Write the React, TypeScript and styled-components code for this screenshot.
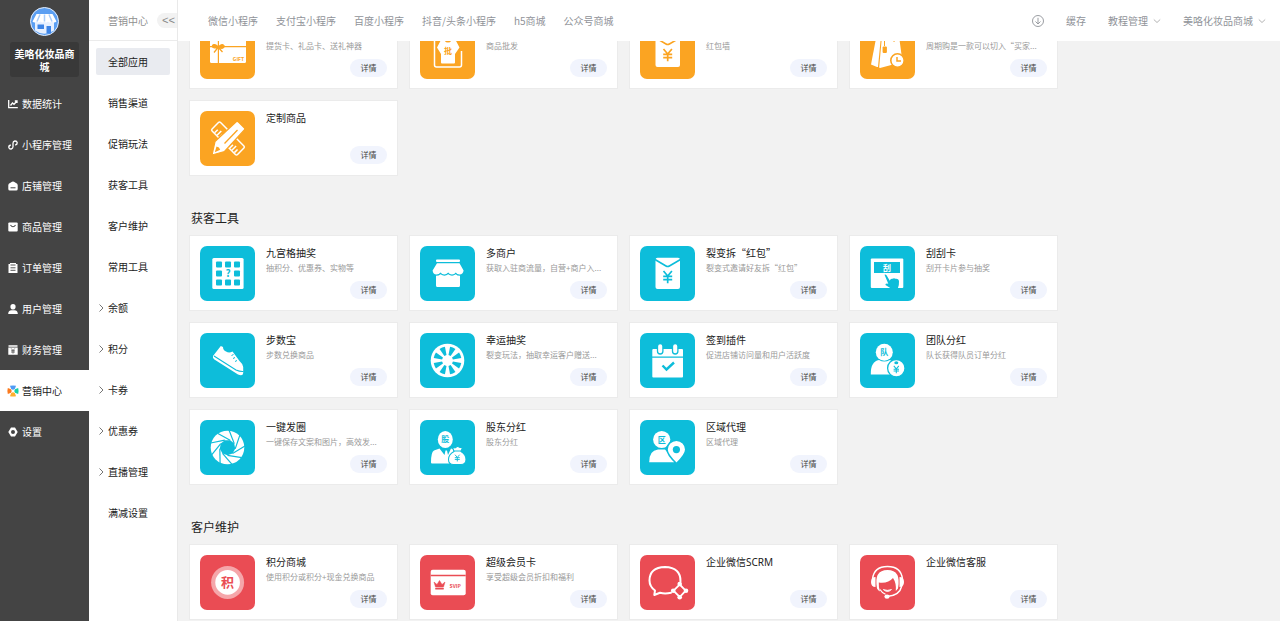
import React, { useLayoutEffect, useRef } from "react";
import styled, { createGlobalStyle } from "styled-components";

const ORANGE = "#fba422";
const CYAN = "#0dbdda";
const RED = "#ea4c54";
const CJK = '"Noto Sans CJK SC", sans-serif';

const GlobalStyle = createGlobalStyle`
  * { box-sizing: border-box; }
  body { margin: 0; font-family: ${CJK}; font-size: 10px; color: #222; background: #f2f2f2; }
  a { color: inherit; text-decoration: none; }
  button { font: inherit; color: inherit; border: 0; padding: 0; cursor: pointer; }
  h2, h3, p, ul { margin: 0; padding: 0; font-weight: 400; }
  ul { list-style: none; }
  svg { display: block; flex: none; }
`;

const Page = styled.div`
  display: flex;
  height: 100vh;
  overflow: hidden;
`;

const Sidebar = styled.aside`
  flex: none;
  width: 89px;
  background: #444;
  color: #fff;
`;

const Brand = styled.div`
  display: flex;
  flex-direction: column;
  align-items: center;
  gap: 6px;
  padding: 7px 10px 6px;
`;

const BrandName = styled.div`
  width: 100%;
  padding: 5px 4px 4px;
  border-radius: 3px;
  background: #393939;
  font-weight: 700;
  line-height: 13px;
  text-align: center;
`;

const MainLink = styled.a<{ $active?: boolean }>`
  display: flex;
  align-items: center;
  gap: 4px;
  height: 41px;
  padding-left: 8px;
  background: ${(p) => (p.$active ? "#fff" : "transparent")};
  && { color: ${(p) => (p.$active ? "#222" : "#fff")}; }
`;

const SubPanel = styled.aside`
  flex: none;
  width: 89px;
  background: #fff;
  border-right: 1px solid #e9e9e9;
`;

const SubHeader = styled.div`
  display: flex;
  align-items: center;
  justify-content: space-between;
  height: 41px;
  padding-left: 19px;
  border-bottom: 1px solid #ebebeb;
  color: #8f8f8f;
`;

const Collapse = styled.button`
  width: 20px;
  height: 15px;
  padding: 2px 0 0 5px;
  border-radius: 8px 0 0 8px;
  background: #f2f2f2;
  text-align: left;
  && { color: #888; font-family: "Liberation Mono", monospace; font-size: 11px; line-height: 13px; }
`;

const SubItem = styled.li`
  display: flex;
  align-items: center;
  height: 41px;
  padding: 0 7px;
`;

const SubLink = styled.a<{ $active?: boolean }>`
  display: flex;
  align-items: center;
  width: 100%;
  height: 27px;
  border-radius: 2px;
  background: ${(p) => (p.$active ? "#e9ebf0" : "transparent")};
`;

const Arrow = styled.span`
  display: flex;
  width: 12px;
  padding-left: 1px;
`;

const Main = styled.div`
  flex: 1;
  min-width: 0;
  display: flex;
  flex-direction: column;
`;

const TopBar = styled.header`
  flex: none;
  display: flex;
  align-items: center;
  justify-content: space-between;
  height: 41px;
  padding: 0 14px 0 30px;
  background: #fff;
  color: #909399;
  white-space: nowrap;
`;

const TopNav = styled.nav`
  display: flex;
  gap: 18px;
`;

const TopTools = styled.div`
  display: flex;
  align-items: center;
  gap: 22px;
`;

const Tool = styled.button`
  display: flex;
  align-items: center;
  gap: 5px;
  background: none;
`;

const Content = styled.main`
  flex: 1;
  min-height: 0;
  overflow-y: auto;
  scrollbar-width: none;
  padding: 11px;
`;

const Section = styled.section`
  padding-bottom: 32px;
`;

const Heading = styled.h2`
  padding: 0 2px 7px;
  font-size: 12px;
  line-height: 20px;
`;

const Cards = styled.div`
  display: flex;
  flex-wrap: wrap;
  gap: 11px;
`;

const Card = styled.article`
  display: flex;
  gap: 11px;
  width: 209px;
  height: 76px;
  padding: 10px;
  border: 1px solid #ebebeb;
  background: #fff;
`;

const Tile = styled.svg`
  width: 55px;
  height: 55px;
  border-radius: 7px;
`;

const Info = styled.div`
  flex: 1;
  min-width: 0;
  display: flex;
  flex-direction: column;
`;

const Title = styled.h3`
  height: 14px;
  font-size: 10px;
  line-height: 14px;
  white-space: nowrap;
`;

const Latin = styled.span`
  font-family: "Noto Sans", ${CJK};
`;

const Desc = styled.p`
  height: 16px;
  color: #999;
  font-size: 8px;
  line-height: 16px;
  white-space: nowrap;
`;

const Detail = styled.button`
  align-self: flex-end;
  width: 37px;
  height: 18px;
  margin-top: 5px;
  border-radius: 9px;
  background: #f1f4fd;
  && { color: #444; font-size: 8px; line-height: 18px; }
`;

/* ---------- tile drawings, 55 x 55 ---------- */

type GlyphProps = { x: number; y: number; size: number; fill: string; children: React.ReactNode };

const Glyph = ({ x, y, size, fill, children }: GlyphProps) => (
  <text x={x} y={y} fontSize={size} fill={fill} fontWeight={700} textAnchor="middle" fontFamily={CJK}>
    {children}
  </text>
);

const Yen = ({ x, y, s = 1, c }: { x: number; y: number; s?: number; c: string }) => (
  <path
    transform={`translate(${x} ${y}) scale(${s})`}
    d="M-4.2 -6L0 -1L4.2 -6M0 -1V6.2M-4.5 -0.6H4.5M-4.5 2.6H4.5"
    fill="none"
    stroke={c}
    strokeWidth="1.7"
  />
);

const Envelope = ({ c }: { c: string }) => (
  <>
    <rect x="15.5" y="11.7" width="24.5" height="31.3" rx="2" fill="#fff" />
    <path d="M15 13.5L26 20Q27.7 21 29.4 20L40.5 13.5" fill="none" stroke={c} strokeWidth="1.6" />
    <Yen x={27.7} y={31} c={c} />
  </>
);

const polar = (r: number, deg: number, cx = 27.5, cy = 27.5) => {
  const a = (deg * Math.PI) / 180;
  return `${(cx + r * Math.cos(a)).toFixed(2)} ${(cy + r * Math.sin(a)).toFixed(2)}`;
};

const drawings: Record<string, React.ReactNode> = {
  gift: (
    <>
      <rect x="10" y="15" width="36" height="24" rx="1.5" fill="#fff" />
      <path d="M10 22.7H46M18.4 15V39" stroke={ORANGE} strokeWidth="1.2" />
      <path d="M18.4 23Q14 19 12.5 21.5Q12 25 18.4 23.5Q24 25.5 24.2 22Q22.5 19 18.4 23L14 28.5M18.4 23.5L22.5 28" fill={ORANGE} stroke={ORANGE} strokeWidth="1.3" />
      <Glyph x={38.5} y={36.5} size={5} fill={ORANGE}>GIFT</Glyph>
    </>
  ),
  wholesale: (
    <>
      <path d="M14.5 12V41Q14.5 43 16.5 43H39.5Q41.5 43 41.5 41V27" fill="none" stroke="#fff" strokeWidth="1.5" />
      <path d="M22 14L17 23.5L21 30V38.5Q21 39.5 22 39.5H34Q35 39.5 35 38.5V30L39.5 23.5L34.5 14Z" fill="#fff" />
      <circle cx="28" cy="15" r="3.5" fill={ORANGE} />
      <Glyph x={28} y={29.5} size={8} fill={ORANGE}>批</Glyph>
    </>
  ),
  wall: <Envelope c={ORANGE} />,
  packet: <Envelope c={CYAN} />,
  period: (
    <>
      <path d="M16.5 12H21L18 43H17L11 40.5Z" fill="#fff" />
      <path d="M22 12H39L42.5 38L20 44Q19 44 19.2 43Z" fill="#fff" />
      <path d="M24.5 12V22M33 12Q35 15 34 18" fill="none" stroke={ORANGE} strokeWidth="1" />
      <rect x="22.6" y="22.5" width="4.3" height="6.5" rx="1" fill={ORANGE} />
      <circle cx="37.5" cy="36.5" r="6.7" fill="#fff" stroke={ORANGE} strokeWidth="1.6" />
      <path d="M37 33V37H41" fill="none" stroke={ORANGE} strokeWidth="1.5" />
    </>
  ),
  custom: (
    <>
      <g transform="rotate(45 28 27.5)" fill="none" stroke="#fff" strokeWidth="1.5">
        <rect x="10" y="21.5" width="36" height="12" rx="1.5" />
        <path d="M14.5 33V28.5M18 33V27M21.5 33V28.5M36 33V28.5M39 33V27M42.5 33V28.5" />
      </g>
      <path d="M12 44L15 30.5L36.5 10.5Q37.2 10 38 10.7L44.5 17.2Q45.2 18 44.5 18.7L24.5 40.5Z" fill="#fff" stroke={ORANGE} strokeWidth="1.2" />
      <path d="M14.8 41.2L16.5 35.5Q19.5 36 20.2 38.8Z" fill={ORANGE} />
      <path d="M24.5 32.5L37.5 19" stroke={ORANGE} strokeWidth="1.3" />
    </>
  ),
  grid: (
    <>
      <rect x="12.3" y="12" width="31.3" height="31" rx="1.5" fill="#fff" />
      {[16, 25, 34].map((x) =>
        [15.5, 24.5, 33.5].map((y) =>
          x === 25 && y === 24.5 ? null : <rect key={`${x}-${y}`} x={x} y={y} width="6" height="6" rx="1" fill={CYAN} />
        )
      )}
      <Glyph x={28} y={31} size={10} fill={CYAN}>?</Glyph>
    </>
  ),
  shop: (
    <>
      <rect x="16" y="13.5" width="24" height="2.6" rx="1" fill="#fff" />
      <path d="M17 17.3H39.5L43.6 24.5Q43 28.5 39.5 28.5Q37 28.5 35.8 26.5Q34.5 28.5 32 28.5Q29.5 28.5 28.2 26.5Q26.5 28.5 24.2 28.5Q22 28.5 20.5 26.5Q19 28.5 16.5 28.5Q13 28.5 12.6 24.5Z" fill="#fff" />
      <path d="M16 29.8Q19 29.8 20.5 28.3Q24.5 31 28.2 28.3Q32 31 35.8 28.3Q37 29.8 40 29.8V39.5Q40 41 38.5 41H17.5Q16 41 16 39.5Z" fill="#fff" />
    </>
  ),
  scratch: (
    <>
      <rect x="10.8" y="12.5" width="32.5" height="29.5" rx="1" fill="#fff" />
      <rect x="14" y="16" width="26" height="11" fill={CYAN} />
      <Glyph x={27} y={24.7} size={8} fill="#fff">刮</Glyph>
      <path d="M24.5 28.8Q26.2 28 27.3 30.5L29.8 34.8Q30.5 32.2 32.5 32.8Q34 31.8 35.5 32.8Q38.8 32.3 39 35.5Q39.3 38 37.8 42.5H31L25.5 39Q25 37.4 26.8 37.4L28.3 37.8Z" fill={CYAN} />
    </>
  ),
  shoe: (
    <>
      <path d="M20.8 13L13 23Q12.5 25 14 26.2L38 41.5Q43 43.5 43.2 40V34Q43 31 39.5 28L35.5 22.5L32.5 18.5Q29 20.5 26 18.5Q23 17 23 14Z" fill="#fff" />
      <path d="M14 23L36 37Q40 38.8 43.5 38.5" fill="none" stroke={CYAN} strokeWidth="1.1" />
      <path d="M31.5 22.5L33.5 21.5M33 25.5L35 24.5M35 28.5L37 27.5" stroke={CYAN} strokeWidth="1" />
    </>
  ),
  wheel: (
    <>
      <circle cx="27.5" cy="27.5" r="16.8" fill="#fff" />
      {Array.from({ length: 8 }, (_, i) => {
        const a = i * 45 + 22.5;
        return <path key={i} d={`M${polar(5.5, a - 12)}L${polar(14, a - 12)}A14 14 0 0 1 ${polar(14, a + 12)}L${polar(5.5, a + 12)}Z`} fill={CYAN} />;
      })}
      <circle cx="27.5" cy="27.5" r="4.6" fill="#fff" />
    </>
  ),
  calendar: (
    <>
      <rect x="12.3" y="16" width="30.7" height="28.6" rx="1" fill="#fff" />
      <path d="M12 24.2H43.3" stroke={CYAN} strokeWidth="1.3" />
      <g fill="#fff" stroke={CYAN} strokeWidth="1.3">
        <rect x="17.5" y="10.5" width="5.4" height="10.5" rx="2.7" />
        <rect x="32.5" y="10.5" width="5.4" height="10.5" rx="2.7" />
      </g>
      <path d="M22.5 32.5L26.5 36.5L34 29.5" fill="none" stroke={CYAN} strokeWidth="2.4" />
    </>
  ),
  team: (
    <>
      <circle cx="24.3" cy="19.3" r="8.5" fill="#fff" />
      <path d="M10.8 41.5Q10.5 28.5 19 27Q24 30 30 27L34 30V41.5Z" fill="#fff" />
      <Glyph x={24.3} y={22.3} size={8} fill={CYAN}>队</Glyph>
      <circle cx="36.3" cy="35.2" r="8.7" fill="#fff" stroke={CYAN} strokeWidth="1.3" />
      <ellipse cx="36.3" cy="29.8" rx="2" ry="1.5" fill={CYAN} />
      <Yen x={36.3} y={36.5} s={0.6} c={CYAN} />
    </>
  ),
  aperture: (
    <>
      <circle cx="27.5" cy="27.5" r="16.8" fill="#fff" />
      <path d={`M${Array.from({ length: 9 }, (_, i) => polar(7.8, i * 40 + 10)).join("L")}Z`} fill={CYAN} />
      {Array.from({ length: 9 }, (_, i) => (
        <path key={i} d={`M${polar(7.8, i * 40 + 10)}L${polar(17.5, i * 40 - 45)}`} stroke={CYAN} strokeWidth="1.2" />
      ))}
    </>
  ),
  holder: (
    <>
      <ellipse cx="25.3" cy="19.5" rx="7.5" ry="8.6" fill="#fff" />
      <Glyph x={25.3} y={22.3} size={8} fill={CYAN}>股</Glyph>
      <path d="M11 42.5Q11 32 14 30.5L19.5 28.5L24.5 35L25.5 30.5L27 30.5L28 35L31 28.5L37 31V43.5H12Q11 43.5 11 42.5Z" fill="#fff" />
      <path d="M32.5 27L35 28L37.5 26.3L40 27.5L42.5 27.2L41 31.5Q46 34.5 46 39.5Q46 44.5 41 44.5H33.5Q28.5 44.5 28.5 39.5Q28.5 34.5 34 31.5Z" fill="#fff" stroke={CYAN} strokeWidth="1.1" />
      <path d="M33.5 31H41.5" stroke={CYAN} strokeWidth="1" />
      <Yen x={37.3} y={38} s={0.55} c={CYAN} />
    </>
  ),
  region: (
    <>
      <circle cx="21.7" cy="19.5" r="8.6" fill="#fff" />
      <Glyph x={21.7} y={22.5} size={8} fill={CYAN}>区</Glyph>
      <path d="M9.2 42.3Q9 30.5 18 29.5H25L34 40V42.3Z" fill="#fff" />
      <path d="M36.5 43.5Q27 34.5 27 29.5A9.4 9.4 0 0 1 45.8 29.5Q45.8 34.5 36.5 43.5Z" fill="#fff" stroke={CYAN} strokeWidth="1.6" />
      <circle cx="36.4" cy="29.6" r="3.6" fill={CYAN} />
    </>
  ),
  points: (
    <>
      <circle cx="27.6" cy="27.4" r="16.5" fill="#fff" fillOpacity=".5" />
      <circle cx="27.6" cy="27.4" r="12.3" fill="#fff" />
      <Glyph x={27.6} y={32.3} size={13} fill={RED}>积</Glyph>
    </>
  ),
  svip: (
    <>
      <rect x="10.7" y="14.7" width="35" height="25.6" rx="2" fill="#fff" />
      <path d="M10.7 20.5H45.7" stroke={RED} strokeWidth="1.3" />
      <path d="M14 27L17 29.5L19.5 25.5L22 29.5L25 27L23.5 32H15.5ZM15.5 33H23.5V34.2H15.5Z" fill={RED} stroke={RED} strokeWidth=".5" />
      <Glyph x={35.2} y={32.8} size={5} fill={RED}>SVIP</Glyph>
    </>
  ),
  scrm: (
    <>
      <path d="M40.5 26.5Q40.8 12.5 25 12Q9.5 12.5 9.5 25.5Q9.5 31.5 15 35.5L14.3 40L20 37.8Q25 39.2 31 37.8" fill="none" stroke="#fff" strokeWidth="2" strokeLinejoin="round" strokeLinecap="round" />
      <path d="M39.7 29.5L45.7 35.7L39.7 42L33.5 35.7Z" fill="none" stroke="#fff" strokeWidth="1.8" />
      <g fill="#fff">
        <circle cx="39.7" cy="29" r="2.3" />
        <circle cx="46" cy="35.7" r="2.3" />
        <circle cx="39.7" cy="42.3" r="2.3" />
        <circle cx="33.2" cy="35.7" r="2.3" />
      </g>
    </>
  ),
  service: (
    <>
      <path d="M12.5 24Q14 11.5 27.5 11.5Q41 11.5 42.5 24" fill="none" stroke="#fff" strokeWidth="1.4" />
      <path d="M17 33.5Q13.5 15 27.5 15Q41.5 15 38 33.5L35.8 36Q36.5 28 33 23Q28 28.8 18.8 27.5Q18.5 32 20 36.5Q18 35.5 17 33.5Z" fill="#fff" />
      <path d="M20 34.5Q22 38 25.5 39.2" fill="none" stroke="#fff" strokeWidth="1.2" />
      <path d="M15.5 22V32Q11 32 11 27Q11 22 15.5 22ZM39.5 22V32Q44 32 44 27Q44 22 39.5 22Z" fill="#fff" />
      <path d="M23.3 34.5Q27.5 38.5 31.5 34.5Q27.5 36.2 23.3 34.5Z" fill="#fff" stroke="#fff" strokeWidth=".8" strokeLinejoin="round" />
      <path d="M41.8 31Q39.5 40.8 27 41.5" fill="none" stroke="#fff" strokeWidth="1.4" />
      <ellipse cx="27" cy="41.6" rx="2.6" ry="2.2" fill="#fff" />
    </>
  ),
};

/* ---------- sidebar drawings, 10 x 10 ---------- */

const sideIcons: Record<string, React.ReactNode> = {
  stats: <path d="M.7 1V8.7H9.8M2.5 6.5L4.5 4L6 5.3L9 2M6.8 2H9V4" fill="none" stroke="#fff" strokeWidth="1.3" />,
  mini: <path d="M2.8 5Q.6 5.6 .8 7.3Q1.2 9.2 3.2 9Q5 8.6 5 6.8V3.2Q5 1.3 6.8 1Q8.8 .9 9.2 2.7Q9.3 4.5 7.2 5" fill="none" stroke="#fff" strokeWidth="1.3" />,
  store: (
    <>
      <path d="M.3 4Q.5 2.6 2 2L4 .8Q5 .3 6 .8L8 2Q9.5 2.6 9.7 4V8Q9.7 9.5 8.2 9.5H1.8Q.3 9.5 .3 8Z" fill="#fff" />
      <path d="M2.5 6.8H7.5" stroke="#444" />
    </>
  ),
  goods: (
    <>
      <rect x=".3" y=".5" width="9.4" height="9" rx="1" fill="#fff" />
      <path d="M2.5 3Q5 6.5 7.5 3" fill="none" stroke="#444" strokeWidth="1.1" />
    </>
  ),
  order: (
    <>
      <path d="M.5 1H2V0H8V1H9.5V10H.5Z" fill="#fff" />
      <path d="M2.5 2H7.5M2.5 4.8H7.5M2.5 7.3H7.5" stroke="#444" strokeWidth=".9" />
    </>
  ),
  user: (
    <>
      <ellipse cx="5" cy="2.8" rx="2.6" ry="2.8" fill="#fff" />
      <path d="M.2 10Q.2 6.5 3.5 6.2H6.5Q9.8 6.5 9.8 10Z" fill="#fff" />
    </>
  ),
  money: (
    <>
      <path d="M.5 .3H9.5V1.8H.5ZM.3 2.5H9.7V9.8H.3Z" fill="#fff" />
      <Yen x={5} y={6} s={0.42} c="#444" />
    </>
  ),
  market: (
    <>
      <path d="M2 -.2Q5 -1 8 -.2L6.8 3Q5 4.5 3.2 3Z" fill="#4f9bf5" />
      <path d="M10.2 2Q11 5 10.2 8L7 6.8Q5.5 5 7 3.2Z" fill="#16cfa5" />
      <path d="M2 10.2Q5 11 8 10.2L6.8 7Q5 5.5 3.2 7Z" fill="#ffb02e" />
      <path d="M-.2 2Q-1 5 -.2 8L3 6.8Q4.5 5 3 3.2Z" fill="#fb7a1e" />
    </>
  ),
  setting: <path d="M3 .5H7L9.7 5L7 9.5H3L.3 5ZM5 3A2 2 0 1 0 5 7A2 2 0 1 0 5 3Z" fill="#fff" fillRule="evenodd" />,
};

const Logo = () => (
  <svg width="29" height="29" viewBox="0 0 29 29">
    <circle cx="14.5" cy="14.5" r="14" fill="#5b9ff2" stroke="#e6eefb" />
    <path d="M5 13V23.5Q14 30 24 23.5V13Z" fill="#e6f0ff" />
    <path d="M6.5 7H22.5L26.5 14.5Q24 16.5 22 14.5Q20 16.5 18 14.5Q16 16.5 14.3 14.5Q12.5 16.5 10.5 14.5Q8.5 16.5 6.5 14.5Q4.5 16.5 2.5 14.5Z" fill="#fff" />
    <path d="M10 7.5L7 14.5M14.5 7.5V14.5M19 7.5L22 14.5" stroke="#a9cdfb" strokeWidth="1.5" />
    <rect x="7.5" y="17.5" width="6.5" height="4.5" fill="#3d84e6" />
    <rect x="16.5" y="19" width="4.5" height="7.5" fill="#3d84e6" />
  </svg>
);

const Chevron = ({ right = false }: { right?: boolean }) => (
  <svg width="8" height="8" viewBox="0 0 8 8" fill="none" stroke={right ? "#666" : "#aaa"}>
    <path d={right ? "M2.5 .5L6 4L2.5 7.5" : "M.8 2.5L4 5.5L7.2 2.5"} strokeWidth=".9" />
  </svg>
);

const mainMenu = [
  ["stats", "数据统计"],
  ["mini", "小程序管理"],
  ["store", "店铺管理"],
  ["goods", "商品管理"],
  ["order", "订单管理"],
  ["user", "用户管理"],
  ["money", "财务管理"],
  ["market", "营销中心"],
  ["setting", "设置"],
];

const subMenu: { label: string; group?: boolean }[] = [
  { label: "全部应用" },
  { label: "销售渠道" },
  { label: "促销玩法" },
  { label: "获客工具" },
  { label: "客户维护" },
  { label: "常用工具" },
  { label: "余额", group: true },
  { label: "积分", group: true },
  { label: "卡券", group: true },
  { label: "优惠券", group: true },
  { label: "直播管理", group: true },
  { label: "满减设置" },
];

const channels = ["微信小程序", "支付宝小程序", "百度小程序", "抖音/头条小程序", "h5商城", "公众号商城"];

type AppEntry = { icon: string; title?: React.ReactNode; desc?: string };

const sections: { heading?: string; color: string; apps: AppEntry[] }[] = [
  {
    color: ORANGE,
    apps: [
      { icon: "gift", desc: "提货卡、礼品卡、送礼神器" },
      { icon: "wholesale", desc: "商品批发" },
      { icon: "wall", desc: "红包墙" },
      { icon: "period", desc: "周期购是一款可以切入“买家..." },
      { icon: "custom", title: "定制商品" },
    ],
  },
  {
    heading: "获客工具",
    color: CYAN,
    apps: [
      { icon: "grid", title: "九宫格抽奖", desc: "抽积分、优惠券、实物等" },
      { icon: "shop", title: "多商户", desc: "获取入驻商流量，自营+商户入..." },
      { icon: "packet", title: "裂变拆“红包”", desc: "裂变式邀请好友拆“红包”" },
      { icon: "scratch", title: "刮刮卡", desc: "刮开卡片参与抽奖" },
      { icon: "shoe", title: "步数宝", desc: "步数兑换商品" },
      { icon: "wheel", title: "幸运抽奖", desc: "裂变玩法，抽取幸运客户赠送..." },
      { icon: "calendar", title: "签到插件", desc: "促进店铺访问量和用户活跃度" },
      { icon: "team", title: "团队分红", desc: "队长获得队员订单分红" },
      { icon: "aperture", title: "一键发圈", desc: "一键保存文案和图片，高效发..." },
      { icon: "holder", title: "股东分红", desc: "股东分红" },
      { icon: "region", title: "区域代理", desc: "区域代理" },
    ],
  },
  {
    heading: "客户维护",
    color: RED,
    apps: [
      { icon: "points", title: "积分商城", desc: "使用积分或积分+现金兑换商品" },
      { icon: "svip", title: "超级会员卡", desc: "享受超级会员折扣和福利" },
      { icon: "scrm", title: <>企业微信<Latin>SCRM</Latin></> },
      { icon: "service", title: "企业微信客服" },
    ],
  },
];

export default function App() {
  const content = useRef<HTMLElement>(null);

  // The list opens slightly scrolled, its first row running under the top bar.
  useLayoutEffect(() => {
    if (content.current) content.current.scrollTop = 39;
  }, []);

  return (
    <Page>
      <GlobalStyle />
      <Sidebar>
        <Brand>
          <Logo />
          <BrandName>美咯化妆品商城</BrandName>
        </Brand>
        <nav>
          {mainMenu.map(([icon, label]) => (
            <MainLink key={icon} href="#" $active={icon === "market"}>
              <svg width="10" height="10" viewBox="0 0 10 10" overflow="visible">{sideIcons[icon]}</svg>
              {label}
            </MainLink>
          ))}
        </nav>
      </Sidebar>

      <SubPanel>
        <SubHeader>
          营销中心
          <Collapse type="button">&lt;&lt;</Collapse>
        </SubHeader>
        <ul>
          {subMenu.map((item, i) => (
            <SubItem key={item.label}>
              <SubLink href="#" $active={i === 0}>
                <Arrow>{item.group && <Chevron right />}</Arrow>
                {item.label}
              </SubLink>
            </SubItem>
          ))}
        </ul>
      </SubPanel>

      <Main>
        <TopBar>
          <TopNav>
            {channels.map((c) => (
              <a key={c} href="#">{c}</a>
            ))}
          </TopNav>
          <TopTools>
            <svg width="12" height="12" viewBox="0 0 12 12" fill="none" stroke="#909399">
              <circle cx="6" cy="6" r="5.5" strokeWidth=".9" />
              <path d="M6 2.8V8.8M3.5 6.5L6 9L8.5 6.5" strokeWidth=".9" />
            </svg>
            <Tool type="button">缓存</Tool>
            <Tool type="button">教程管理<Chevron /></Tool>
            <Tool type="button">美咯化妆品商城<Chevron /></Tool>
          </TopTools>
        </TopBar>

        <Content ref={content}>
          {sections.map((s) => (
            <Section key={s.color}>
              {s.heading && <Heading>{s.heading}</Heading>}
              <Cards>
                {s.apps.map((app) => (
                  <Card key={app.icon}>
                    <Tile viewBox="0 0 55 55">
                      <rect width="55" height="55" fill={s.color} />
                      {drawings[app.icon]}
                    </Tile>
                    <Info>
                      <Title>{app.title}</Title>
                      <Desc>{app.desc}</Desc>
                      <Detail type="button">详情</Detail>
                    </Info>
                  </Card>
                ))}
              </Cards>
            </Section>
          ))}
        </Content>
      </Main>
    </Page>
  );
}
